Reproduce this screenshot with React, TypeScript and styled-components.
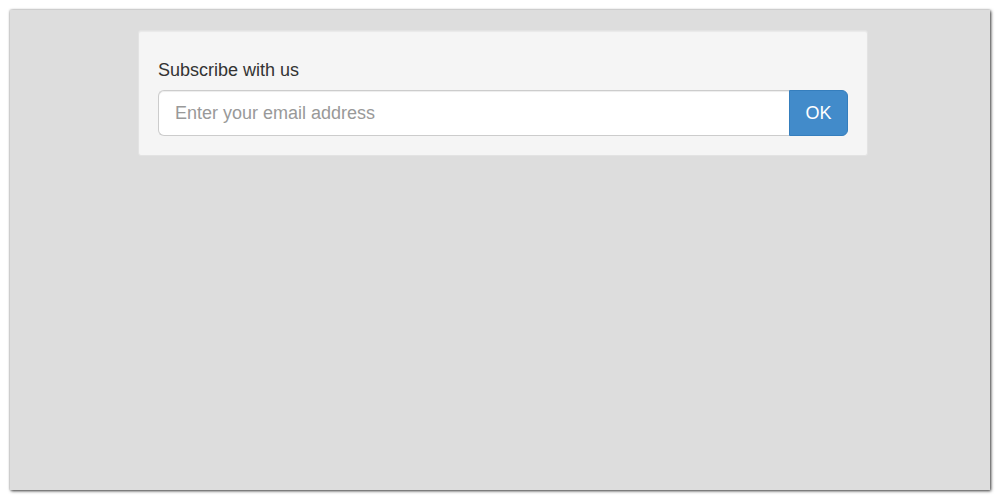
import React from "react";
import styled, { createGlobalStyle } from "styled-components";

const GlobalStyle = createGlobalStyle`
  html, body {
    margin: 0;
    padding: 0;
    background: #ffffff;
  }
  body {
    font-family: "Liberation Sans", Arial, sans-serif;
    color: #333333;
  }
  * {
    box-sizing: border-box;
  }
`;

const Page = styled.div`
  width: 1000px;
  height: 500px;
  padding: 10px;
`;

const Stage = styled.div`
  width: 980px;
  height: 480px;
  background: #dddddd;
  box-shadow: 1px 1px 3px rgba(0, 0, 0, 0.75), 0 0 2px rgba(0, 0, 0, 0.25);
  padding: 20px 122px 0 128px;
`;

const Well = styled.form`
  background: #f5f5f5;
  border: 1px solid #e3e3e3;
  border-radius: 3px;
  padding: 19px;
  box-shadow: inset 0 1px 1px rgba(0, 0, 0, 0.05);
`;

const Label = styled.label`
  display: block;
  font-size: 18px;
  line-height: 29px;
  padding-top: 6px;
  margin-bottom: 5px;
  color: #333333;
`;

const InputGroup = styled.div`
  display: flex;
  height: 46px;
`;

const EmailInput = styled.input`
  flex: 1;
  min-width: 0;
  height: 46px;
  padding: 10px 16px;
  font-family: inherit;
  font-size: 18px;
  color: #555555;
  background: #ffffff;
  border: 1px solid #cccccc;
  border-right: none;
  border-radius: 6px 0 0 6px;
  box-shadow: inset 0 1px 1px rgba(0, 0, 0, 0.075);
  outline: none;

  &::placeholder {
    color: #999999;
  }
`;

const SubmitButton = styled.button`
  width: 59px;
  height: 46px;
  padding: 0;
  font-family: inherit;
  font-size: 18px;
  color: #ffffff;
  background: #428bca;
  border: 1px solid #357ebd;
  border-radius: 0 6px 6px 0;
  cursor: pointer;
`;

export default function App() {
  return (
    <>
      <GlobalStyle />
      <Page>
        <Stage>
          <Well onSubmit={(e) => e.preventDefault()}>
            <Label htmlFor="email">Subscribe with us</Label>
            <InputGroup>
              <EmailInput id="email" type="email" placeholder="Enter your email address" />
              <SubmitButton type="submit">OK</SubmitButton>
            </InputGroup>
          </Well>
        </Stage>
      </Page>
    </>
  );
}
